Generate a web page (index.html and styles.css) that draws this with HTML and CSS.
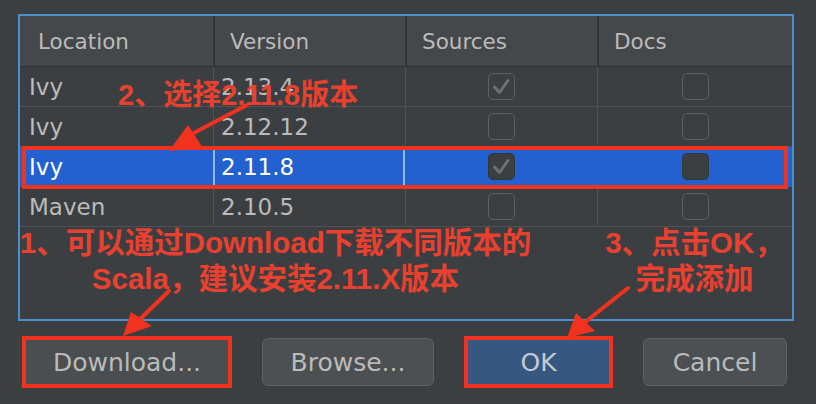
FILE: index.html
```html
<!DOCTYPE html>
<html lang="zh">
<head>
<meta charset="utf-8">
<title>Scala SDK</title>
<link rel="stylesheet" href="styles.css">
</head>
<body>
<div class="screen">
  <div class="table-box">
    <div class="thead">
      <div class="th">Location</div>
      <div class="th">Version</div>
      <div class="th">Sources</div>
      <div class="th">Docs</div>
    </div>
    <div class="row">
      <div class="td">Ivy</div>
      <div class="td">2.13.4</div>
      <div class="td center"><span class="cb"><svg viewBox="0 0 27 27"><path d="M6.5 14 L11.5 19.5 L20 7.5"/></svg></span></div>
      <div class="td center"><span class="cb"></span></div>
    </div>
    <div class="row">
      <div class="td">Ivy</div>
      <div class="td">2.12.12</div>
      <div class="td center"><span class="cb"></span></div>
      <div class="td center"><span class="cb"></span></div>
    </div>
    <div class="row selected">
      <div class="td">Ivy</div>
      <div class="td focus">2.11.8</div>
      <div class="td center"><span class="cb filled"><svg viewBox="0 0 27 27"><path d="M6.5 14 L11.5 19.5 L20 7.5"/></svg></span></div>
      <div class="td center"><span class="cb filled"></span></div>
    </div>
    <div class="row">
      <div class="td">Maven</div>
      <div class="td">2.10.5</div>
      <div class="td center"><span class="cb"></span></div>
      <div class="td center"><span class="cb"></span></div>
    </div>
    <div class="frame sel-frame"></div>
  </div>
  <div class="buttons">
    <button class="btn btn-download">Download...</button>
    <button class="btn btn-browse">Browse...</button>
    <button class="btn btn-ok">OK</button>
    <button class="btn btn-cancel">Cancel</button>
  </div>

  <div class="note note-select">2、选择2.11.8版本</div>
  <div class="note note-download">1、可以通过Download下载不同版本的<br>Scala，建议安装2.11.X版本</div>
  <div class="note note-ok">3、点击OK，<br>完成添加</div>

  <svg class="arrows" viewBox="0 0 816 404" width="816" height="404">
    <g stroke="#f0321f" stroke-width="4" stroke-linecap="round" fill="none">
      <line x1="247" y1="105" x2="188" y2="136"/>
      <line x1="169" y1="291" x2="138" y2="321"/>
      <line x1="628" y1="288" x2="584" y2="323"/>
    </g>
    <g fill="#f0321f">
      <polygon points="188,125 169,151 203,148"/>
      <polygon points="131,312 123,336 152,326"/>
      <polygon points="576,313 567,338 595,331"/>
    </g>
  </svg>
</div>
</body>
</html>
```
FILE: styles.css
```css
* { box-sizing: border-box; }
html, body { margin: 0; padding: 0; }
body {
  background: #3c3f41;
  width: 816px;
  height: 404px;
  overflow: hidden;
  font-family: "DejaVu Sans", "Noto Sans CJK SC", sans-serif;
}
.screen {
  position: relative;
  width: 816px;
  height: 404px;
  padding: 14px 0 0 18px;
  background: #3c3f41;
}
.table-box {
  position: relative;
  width: 776px;
  height: 307px;
  border: 2px solid #4b8fcf;
  background: #3c3f41;
}
.thead, .row {
  display: grid;
  grid-template-columns: 193px 192px 192px 1fr;
}
.thead {
  height: 51px;
  background: #45484a;
  border-bottom: 1px solid #313335;
}
.th {
  display: flex;
  align-items: center;
  padding-left: 18px;
  font-size: 21.5px;
  color: #bbbbbb;
}
.th + .th { border-left: 2px solid #323436; padding-left: 15px; }
.row {
  height: 40px;
  border-bottom: 1px solid #4f5254;
}
.td {
  display: flex;
  align-items: center;
  padding-left: 9px;
  font-size: 23px;
  color: #bbbbbb;
}
.td + .td { border-left: 1px solid #4f5254; padding-left: 7px; }
.td.center { justify-content: center; padding-left: 0; }
.row.selected { background: #2261cf; border-bottom-color: #2261cf; }
.row.selected .td { color: #ffffff; border-left-color: #2261cf; }
.row.selected .td.focus { border-left: 2px solid #8fbaf0; border-right: 2px solid #8fbaf0; padding-left: 6px; }
.cb {
  width: 27px;
  height: 27px;
  border: 1.5px solid #5d6062;
  border-radius: 5px;
  display: flex;
  align-items: center;
  justify-content: center;
}
.cb svg { width: 27px; height: 27px; flex: none; }
.cb path { fill: none; stroke: #6f7274; stroke-width: 3; stroke-linecap: round; stroke-linejoin: round; }
.cb.filled { background: #3c3f41; border-color: #34373a; }
.frame {
  position: absolute;
  border: 4px solid #f0321f;
}
.sel-frame {
  left: 2px;
  top: 130px;
  width: 766px;
  height: 43px;
}
.buttons {
  display: flex;
  gap: 32px;
  margin: 17px 0 0 6px;
}
.btn {
  height: 48px;
  border: 1px solid #5e6163;
  border-radius: 6px;
  background: #4c5052;
  color: #bbbbbb;
  font-family: "DejaVu Sans", sans-serif;
  font-size: 25px;
  padding: 0;
}
.btn-download { width: 206px; outline: 4px solid #f0321f; outline-offset: -2px; border-radius: 0; background: #4a4e50; }
.btn-browse { width: 172px; }
.btn-ok { width: 145px; background: #365880; border-color: #4a6f95; color: #c3cad2; outline: 4px solid #f0321f; outline-offset: -2px; border-radius: 0; }
.btn-cancel { width: 144px; }
.note {
  position: absolute;
  color: #ea402f;
  font-family: "Liberation Sans", "Noto Sans CJK SC", sans-serif;
  font-weight: bold;
  font-size: 29.5px;
  line-height: 36px;
  white-space: nowrap;
}
.note-select { left: 118px; top: 77px; font-size: 29px; }
.note-download { left: 0; top: 225px; width: 551px; text-align: center; }
.note-ok { left: 584px; top: 225px; width: 221px; text-align: center; }
.arrows {
  position: absolute;
  left: 0;
  top: 0;
  pointer-events: none;
}
```
